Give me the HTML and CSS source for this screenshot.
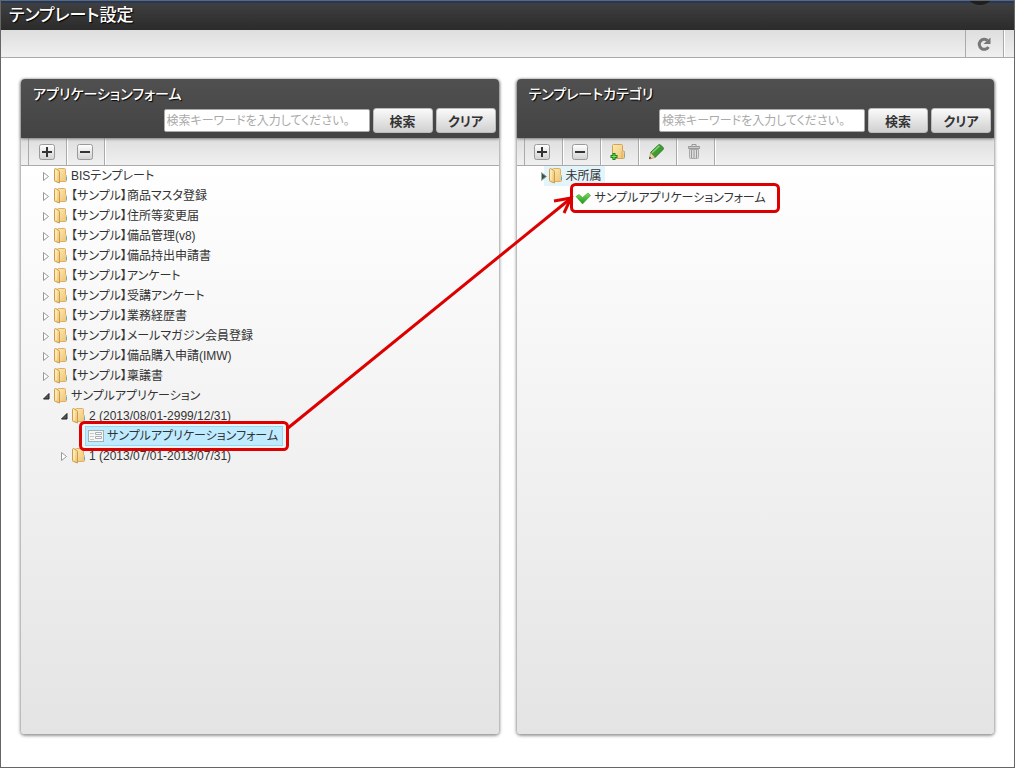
FILE: index.html
```html
<!DOCTYPE html>
<html lang="ja">

<head>
    <meta charset="UTF-8">
    <meta name="viewport" content="width=device-width, initial-scale=1.0">
    <title>テンプレート設定</title>
    <link rel="stylesheet" href="styles.css">
</head>

<body>
    <!-- shared icons -->
    <svg class="defs" width="0" height="0">
        <defs>
            <linearGradient id="gold" x1="0" y1="0" x2="1" y2="1">
                <stop offset="0" stop-color="#fdebb4" />
                <stop offset="1" stop-color="#efc274" />
            </linearGradient>
            <linearGradient id="face" x1="0" y1="0" x2="0" y2="1">
                <stop offset="0" stop-color="#ffffff" />
                <stop offset="1" stop-color="#d2d2d2" />
            </linearGradient>
            <linearGradient id="leaf" x1="0" y1="0" x2="0" y2="1">
                <stop offset="0" stop-color="#7bdc5c" />
                <stop offset="1" stop-color="#1d9420" />
            </linearGradient>
        </defs>
        <symbol id="folder" viewBox="0 0 14 16">
            <path d="M3.500 1.500q0-1 1-1h6q1 0 1 1v5l1 1v5q0 1-1 1h-8z" fill="url(#gold)" stroke="#deb066" />
            <path d="M.5 1.500q0-1 1-1L5 2.500q.5.300.5 1v11.500L1.500 13.500q-1 0-1-1z" fill="url(#gold)" stroke="#cc9c4c" />
            <path d="M2 2.500v9.500" stroke="#fff3c8" />
            <path d="M12.500 9v3" stroke="#4db6dc" />
        </symbol>
        <symbol id="closed" viewBox="0 0 8 9">
            <path d="M1.500.5v8l5-4z" fill="#fff" stroke="#999" />
        </symbol>
        <symbol id="opened" viewBox="0 0 8 9">
            <path d="M7 1.500v5.500h-5.500z" fill="#555" stroke="#222" />
        </symbol>
        <symbol id="plus" viewBox="0 0 16 16">
            <rect x=".5" y=".5" width="15" height="15" rx="2" fill="url(#face)" stroke="#9a9a9a" />
            <path d="M3 8h10M8 3v10" stroke="#333" stroke-width="2" />
        </symbol>
        <symbol id="minus" viewBox="0 0 16 16">
            <rect x=".5" y=".5" width="15" height="15" rx="2" fill="url(#face)" stroke="#9a9a9a" />
            <path d="M3 8h10" stroke="#333" stroke-width="2" />
        </symbol>
    </svg>

    <div class="page">
        <header class="title">
            <h1>テンプレート設定</h1>
            <span class="knob"></span>
        </header>
        <div class="bar">
            <button class="tool reload" type="button" aria-label="更新">
                <svg width="16" height="16" viewBox="0 0 16 16">
                    <path d="M12.500 11A5 5 0 1 1 11.500 4.500" fill="none" stroke="#777" stroke-width="3" />
                    <path d="M14.500 1.500v6.500H7.500z" fill="#777" />
                </svg>
            </button>
        </div>

        <main class="panels">
            <section class="panel">
                <div class="panel-head">
                    <h2>アプリケーションフォーム</h2>
                    <form class="search">
                        <input type="text" aria-label="アプリケーションフォーム検索" placeholder="検索キーワードを入力してください。">
                        <button type="button">検索</button>
                        <button type="button">クリア</button>
                    </form>
                </div>
                <div class="toolbar">
                    <button class="tool" type="button" aria-label="開く"><svg width="16" height="16"><use href="#plus" /></svg></button>
                    <button class="tool" type="button" aria-label="閉じる"><svg width="16" height="16"><use href="#minus" /></svg></button>
                </div>
                <ul class="tree">
                    <li><svg class="arrow"><use href="#closed" /></svg><svg class="folder"><use href="#folder" /></svg><span>BISテンプレート</span></li>
                    <li><svg class="arrow"><use href="#closed" /></svg><svg class="folder"><use href="#folder" /></svg><span>【サンプル】商品マスタ登録</span></li>
                    <li><svg class="arrow"><use href="#closed" /></svg><svg class="folder"><use href="#folder" /></svg><span>【サンプル】住所等変更届</span></li>
                    <li><svg class="arrow"><use href="#closed" /></svg><svg class="folder"><use href="#folder" /></svg><span>【サンプル】備品管理(v8)</span></li>
                    <li><svg class="arrow"><use href="#closed" /></svg><svg class="folder"><use href="#folder" /></svg><span>【サンプル】備品持出申請書</span></li>
                    <li><svg class="arrow"><use href="#closed" /></svg><svg class="folder"><use href="#folder" /></svg><span>【サンプル】アンケート</span></li>
                    <li><svg class="arrow"><use href="#closed" /></svg><svg class="folder"><use href="#folder" /></svg><span>【サンプル】受講アンケート</span></li>
                    <li><svg class="arrow"><use href="#closed" /></svg><svg class="folder"><use href="#folder" /></svg><span>【サンプル】業務経歴書</span></li>
                    <li><svg class="arrow"><use href="#closed" /></svg><svg class="folder"><use href="#folder" /></svg><span>【サンプル】メールマガジン会員登録</span></li>
                    <li><svg class="arrow"><use href="#closed" /></svg><svg class="folder"><use href="#folder" /></svg><span>【サンプル】備品購入申請(IMW)</span></li>
                    <li><svg class="arrow"><use href="#closed" /></svg><svg class="folder"><use href="#folder" /></svg><span>【サンプル】稟議書</span></li>
                    <li><svg class="arrow"><use href="#opened" /></svg><svg class="folder"><use href="#folder" /></svg><span>サンプルアプリケーション</span></li>
                    <li class="level2"><svg class="arrow"><use href="#opened" /></svg><svg class="folder"><use href="#folder" /></svg><span>2 (2013/08/01-2999/12/31)</span></li>
                    <li class="level3">
                        <div class="selected">
                            <svg width="16" height="12" viewBox="0 0 16 12">
                                <rect x=".5" y=".5" width="15" height="11" fill="#f6f8f8" stroke="#a5b0b3" />
                                <path d="M2 3.500h4M2 6.500h4M2 9.500h4" stroke="#c4cacc" />
                                <path d="M7.500 2.500h6v2h-6zM7.500 6.500h6v2h-6z" fill="#fff" stroke="#a5b0b3" />
                            </svg>
                            <span>サンプルアプリケーションフォーム</span>
                        </div>
                    </li>
                    <li class="level2"><svg class="arrow"><use href="#closed" /></svg><svg class="folder"><use href="#folder" /></svg><span>1 (2013/07/01-2013/07/31)</span></li>
                </ul>
            </section>

            <section class="panel">
                <div class="panel-head">
                    <h2>テンプレートカテゴリ</h2>
                    <form class="search">
                        <input type="text" aria-label="テンプレートカテゴリ検索" placeholder="検索キーワードを入力してください。">
                        <button type="button">検索</button>
                        <button type="button">クリア</button>
                    </form>
                </div>
                <div class="toolbar">
                    <button class="tool" type="button" aria-label="開く"><svg width="16" height="16"><use href="#plus" /></svg></button>
                    <button class="tool" type="button" aria-label="閉じる"><svg width="16" height="16"><use href="#minus" /></svg></button>
                    <button class="tool" type="button" aria-label="新規">
                        <svg width="16" height="16" viewBox="0 0 16 16">
                            <path d="M2.500 1.500q0-1 1-1h8q1 0 1 1v5l2 1v6q0 1-1 1h-11z" fill="url(#gold)" stroke="#d5a253" />
                            <path d="M12 7v7" stroke="#dcb068" />
                            <path d="M14.500 10v3" stroke="#4db6dc" />
                            <path d="M4 9v7M.5 12.500h7" stroke="#16851b" stroke-width="3" />
                            <path d="M4 10v5M1.500 12.500h5" stroke="#7ede70" />
                        </svg>
                    </button>
                    <button class="tool" type="button" aria-label="編集">
                        <svg width="16" height="16" viewBox="0 0 16 16">
                            <path d="M2.500 8.500l8-7.500q1-.8 2 0l2.500 2.500q.8 1 0 2l-8 8z" fill="#3f9c33" stroke="#257820" />
                            <path d="M4 8.700l7.500-7" stroke="#8bd37d" stroke-width="1.500" />
                            <path d="M2.500 8.500l4.500 5-5.500 1.500z" fill="#ecd3a1" stroke="#a58b58" stroke-width=".6" />
                            <path d="M1.600 12.500l2 1.800-2.600.8z" fill="#333" />
                        </svg>
                    </button>
                    <button class="tool" type="button" aria-label="削除">
                        <svg width="16" height="16" viewBox="0 0 16 16">
                            <path d="M6 2V.5h4V2" fill="none" stroke="#999" />
                            <path d="M2.500 2.500h11v2h-11z" fill="#ccc" stroke="#999" />
                            <path d="M3.500 5.500h9v8q0 1-1 1h-7q-1 0-1-1z" fill="#ddd" stroke="#aaa" />
                            <path d="M5.500 6v8M8 6v8M10.500 6v8" stroke="#999" />
                        </svg>
                    </button>
                </div>
                <ul class="tree category">
                    <li><span class="hover"><svg class="arrow"><path d="M1.500.5v8l5-4z" fill="#35573f" stroke="#9aa" /></svg><svg class="folder"><use href="#folder" /></svg><span>未所属</span></span></li>
                    <li class="dropped">
                        <svg width="16" height="14" viewBox="0 0 16 14">
                            <path d="M1 5.500l3-2 3.500 3L13 2l2.500 2.500-8 8.500z" fill="url(#leaf)" stroke="#3aa12c" stroke-width=".6" />
                        </svg>
                        <span>サンプルアプリケーションフォーム</span>
                    </li>
                </ul>
            </section>
        </main>

        <!-- drag and drop guide, drawn over both trees -->
        <svg class="guide" width="1015" height="768" viewBox="0 0 1015 768">
            <rect x="80.500" y="422.500" width="207" height="27" rx="4" />
            <rect x="571.500" y="184.500" width="207" height="27" rx="4" />
            <path d="M288 428L570 199" />
            <path d="M554 201l17-3-7 15" />
        </svg>
    </div>
</body>

</html>
```

FILE: styles.css
```css
* {
    box-sizing: border-box;
    margin: 0;
    padding: 0;
}

body {
    font-family: "Liberation Sans", "Noto Sans CJK JP", sans-serif;
    font-size: 12px;
    font-feature-settings: "palt";
    color: #333;
    background-color: #fff;
}

.defs {
    position: absolute;
}

.page {
    position: relative;
    display: flex;
    flex-direction: column;
    min-height: 100vh;
    border: 1px solid #666;
}

.title {
    position: relative;
    height: 29px;
    padding-left: 8px;
    overflow: hidden;
    background: linear-gradient(#414141, #2b2b2b);
    box-shadow: inset 0 2px #203864;
}

.title h1 {
    font-size: 17px;
    font-weight: 500;
    line-height: 30px;
    color: #fff;
    text-shadow: 1px 1px 1px #000;
}

.knob {
    position: absolute;
    top: -26px;
    right: 19px;
    width: 30px;
    height: 30px;
    border-radius: 50%;
    background-color: #1c1f22;
}

.bar {
    display: flex;
    justify-content: flex-end;
    height: 28px;
    padding-right: 10px;
    border-bottom: 1px solid #aaa;
    background: linear-gradient(#dedede, #f0f0f0);
}

.tool {
    display: flex;
    align-items: center;
    justify-content: center;
    width: 38px;
    height: 100%;
    padding-right: 2px;
    border: 0;
    border-right: 1px solid #aaa;
    background: none;
    box-shadow: 1px 0 #fff;
}

.reload {
    width: 39px;
    border-left: 1px solid #aaa;
}

.panels {
    display: flex;
    flex: 1;
    gap: 18px;
    padding: 21px 20px 33px;
}

.panel {
    flex: 1;
    min-width: 0;
    border-radius: 4px;
    background: linear-gradient(#fff 80px, #e4e4e4);
    box-shadow: 0 1px 3px 1px #999;
}

.panel-head {
    position: relative;
    height: 59px;
    padding-right: 3px;
    border-radius: 4px 4px 0 0;
    background: linear-gradient(#505050, #434343);
    box-shadow: 0 1px 3px #777;
}

.panel-head h2 {
    height: 29px;
    padding-left: 12px;
    font-size: 14px;
    font-weight: 500;
    line-height: 31px;
    color: #fff;
    text-shadow: 1px 1px 1px #000;
}

.search {
    display: flex;
    align-items: center;
    justify-content: flex-end;
    gap: 3px;
}

.search input {
    width: 206px;
    height: 23px;
    padding: 0 2px;
    border: 1px solid #aaa;
    border-radius: 2px;
    font: inherit;
    font-feature-settings: inherit;
    background-color: #fff;
}

.search input::placeholder {
    color: #aaa;
}

.search button {
    width: 60px;
    height: 25px;
    border: 1px solid #bbb;
    border-radius: 3px;
    font-family: inherit;
    font-feature-settings: inherit;
    font-size: 13px;
    font-weight: bold;
    color: #333;
    background: linear-gradient(#fafafa, #d0d0d0);
}

.toolbar {
    display: flex;
    height: 28px;
    padding-left: 7px;
    border-bottom: 1px solid #aaa;
    background: linear-gradient(#dedede, #f0f0f0);
}

.toolbar .tool:first-child {
    width: 39px;
    border-left: 1px solid #aaa;
}

.tree {
    padding-left: 21px;
    list-style: none;
}

.tree li {
    display: flex;
    align-items: center;
    height: 20px;
    line-height: 20px;
    white-space: nowrap;
}

.arrow {
    width: 8px;
    height: 9px;
    margin-right: 4px;
}

.folder {
    width: 14px;
    height: 16px;
    margin-right: 3px;
}

.tree .level2 {
    padding-left: 18px;
}

.tree .level3 {
    padding-left: 43px;
}

.selected {
    display: flex;
    align-items: center;
    gap: 3px;
    width: 198px;
    height: 20px;
    padding-left: 2px;
    border: 1px solid #99d6ef;
    background-color: #beebff;
}

.category {
    padding-left: 23px;
}

.category .arrow {
    margin-right: 1px;
}

.hover {
    display: flex;
    align-items: center;
    padding-right: 3px;
    background: linear-gradient(90deg, transparent 4px, #e4f4fb 4px);
}

.tree .dropped {
    gap: 4px;
    height: 24px;
    padding-left: 35px;
}

.guide {
    position: absolute;
    top: -1px;
    left: -1px;
    pointer-events: none;
    fill: none;
    stroke: #dc0000;
    stroke-width: 3;
}
```
